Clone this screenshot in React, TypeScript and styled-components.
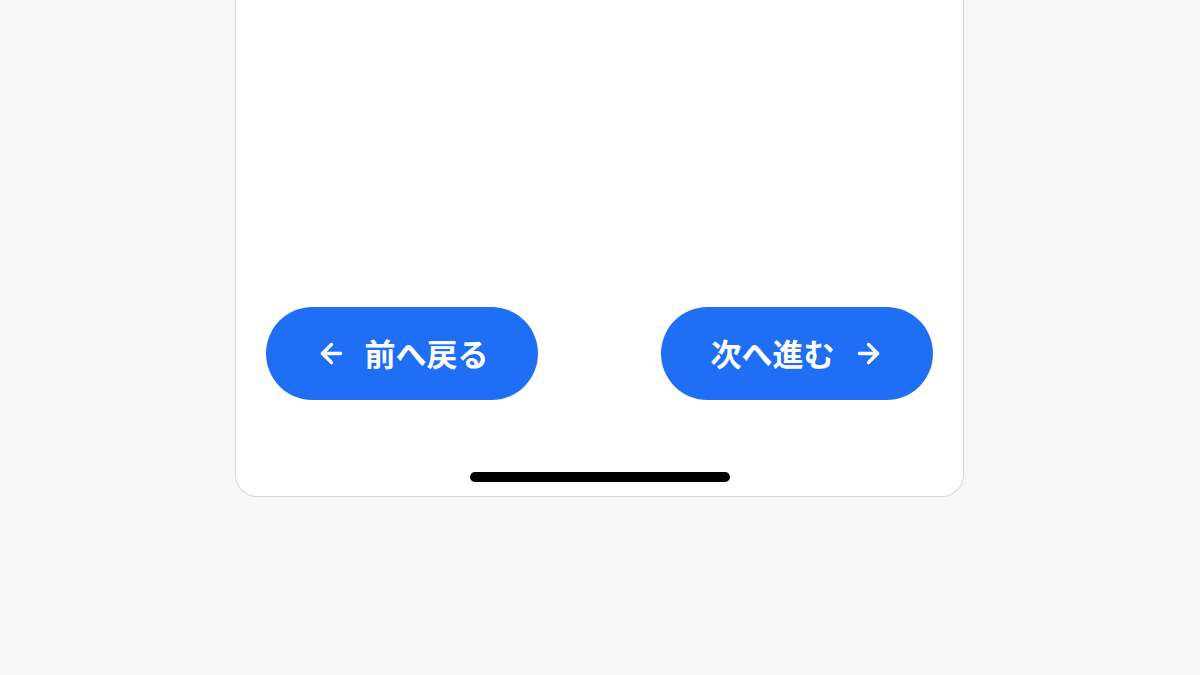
import * as React from "react";
import styled, { createGlobalStyle } from "styled-components";
import { ArrowLeft, ArrowRight } from "lucide-react";

const GlobalStyle = createGlobalStyle`
  html, body {
    margin: 0;
    padding: 0;
    background: #f7f7f7;
  }
  body {
    font-family: "Noto Sans CJK JP", "Noto Sans", sans-serif;
  }
`;

const Page = styled.div`
  width: 1200px;
  height: 675px;
  display: flex;
  justify-content: center;
  align-items: flex-start;
  overflow: hidden;
`;

const Phone = styled.div`
  width: 729px;
  height: 497px;
  box-sizing: border-box;
  margin-left: -1px;
  background: #ffffff;
  border: 1px solid #d6d6d6;
  border-top: none;
  border-radius: 0 0 22px 22px;
  display: flex;
  flex-direction: column;
  justify-content: flex-end;
  align-items: center;
  padding-bottom: 14px;
`;

const NavRow = styled.div`
  width: 100%;
  box-sizing: border-box;
  padding: 0 30px;
  display: flex;
  justify-content: space-between;
  margin-bottom: 72px;
`;

const NavButton = styled.button`
  width: 272px;
  height: 93px;
  border: none;
  border-radius: 47px;
  background: #1f6ff6;
  color: #ffffff;
  display: flex;
  align-items: center;
  justify-content: center;
  gap: 18px;
  font-family: "Noto Sans CJK JP", "Noto Sans", sans-serif;
  font-weight: 700;
  font-size: 31px;
  line-height: 1;
  cursor: pointer;
  padding: 0;

  svg {
    flex-shrink: 0;
  }
`;

const Label = styled.span`
  display: inline-block;
  padding-bottom: 2px;
`;

const HomeBar = styled.div`
  width: 260px;
  height: 10px;
  border-radius: 5px;
  background: #000000;
`;

export default function App() {
  return (
    <>
      <GlobalStyle />
      <Page>
        <Phone>
          <NavRow>
            <NavButton>
              <ArrowLeft size={31} strokeWidth={2.6} />
              <Label>前へ戻る</Label>
            </NavButton>
            <NavButton>
              <Label>次へ進む</Label>
              <ArrowRight size={31} strokeWidth={2.6} />
            </NavButton>
          </NavRow>
          <HomeBar />
        </Phone>
      </Page>
    </>
  );
}
